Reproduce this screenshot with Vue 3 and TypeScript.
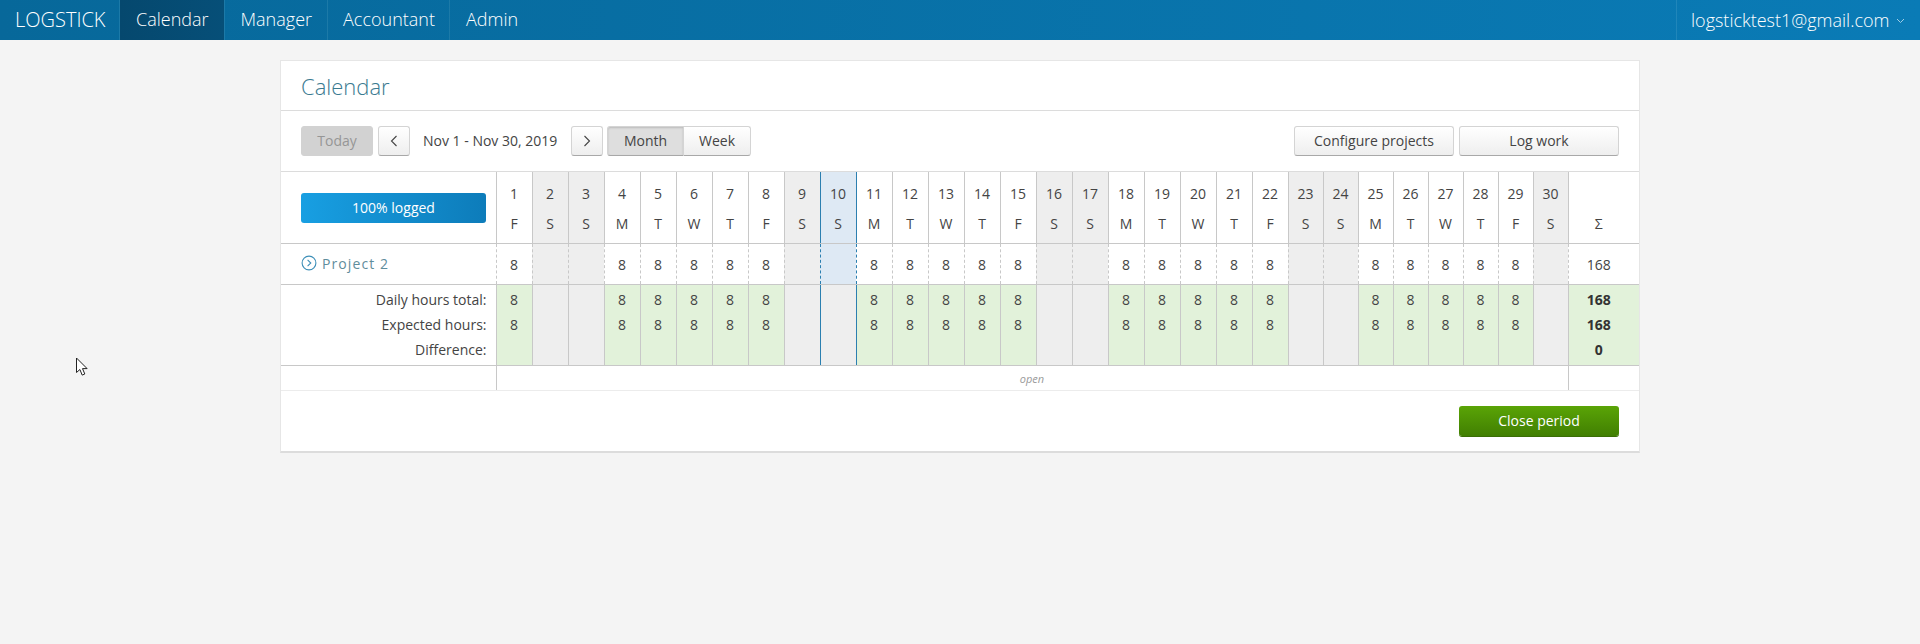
<script setup lang="ts">
interface Day {
  n: number
  w: string
  weekend: boolean
  selected: boolean
}

const letters = ['F', 'S', 'S', 'M', 'T', 'W', 'T']
const days: Day[] = Array.from({ length: 30 }, (_, i) => {
  const w = letters[i % 7]
  return { n: i + 1, w, weekend: w === 'S', selected: i === 9 }
})
const navItems = ['Calendar', 'Manager', 'Accountant', 'Admin']
const dayClass = (d: Day) => ({ weekend: d.weekend, selected: d.selected })
</script>

<template>
  <div class="page">
    <header class="nav">
      <div class="brand">LOGSTICK</div>
      <a v-for="(item, i) in navItems" :key="item" class="nav-item" :class="{ active: i === 0 }">{{ item }}</a>
      <div class="user">
        <span>logsticktest1@gmail.com</span>
        <svg width="9" height="6" viewBox="0 0 9 6" class="caret"><path d="M1 1l3.5 3.5L8 1" fill="none" stroke="#9fcde6" stroke-width="1" /></svg>
      </div>
    </header>

    <main class="card">
      <h1 class="title">Calendar</h1>

      <div class="toolbar">
        <button class="btn today">Today</button>
        <button class="btn arrow">
          <svg width="8" height="12" viewBox="0 0 8 12"><path d="M6.5 1L1.5 6l5 5" fill="none" stroke="#444" stroke-width="1.1" /></svg>
        </button>
        <span class="range">Nov 1 - Nov 30, 2019</span>
        <button class="btn arrow">
          <svg width="8" height="12" viewBox="0 0 8 12"><path d="M1.5 1l5 5-5 5" fill="none" stroke="#444" stroke-width="1.1" /></svg>
        </button>
        <div class="segment">
          <button class="btn seg month">Month</button>
          <button class="btn seg week">Week</button>
        </div>
        <div class="spacer"></div>
        <button class="btn wide">Configure projects</button>
        <button class="btn wide">Log work</button>
      </div>

      <table class="grid">
        <colgroup>
          <col class="col-label" />
          <col v-for="d in days" :key="d.n" :class="d.n > 22 ? 'col-narrow' : 'col-day'" />
          <col class="col-sum" />
        </colgroup>
        <tbody>
          <tr class="row-head">
            <td class="label"><div class="logged">100% logged</div></td>
            <td v-for="d in days" :key="d.n" class="day" :class="dayClass(d)">
              <div class="num">{{ d.n }}</div>
              <div class="wd">{{ d.w }}</div>
            </td>
            <td class="sum-head"><div class="wd">Σ</div></td>
          </tr>
          <tr class="row-project">
            <td class="label project">
              <span class="project-name">
                <svg width="16" height="16" viewBox="0 0 16 16"><circle cx="8" cy="8" r="6.9" fill="none" stroke="#3d8fb8" stroke-width="1.1" /><path d="M6.6 4.8L9.8 8l-3.2 3.2" fill="none" stroke="#3d8fb8" stroke-width="1.1" /></svg>
                Project 2
              </span>
            </td>
            <td v-for="d in days" :key="d.n" class="hours" :class="dayClass(d)">{{ d.weekend ? '' : 8 }}</td>
            <td class="sum-plain">168</td>
          </tr>
          <tr class="row-total">
            <td class="label totals">
              <div>Daily hours total:</div>
              <div>Expected hours:</div>
              <div>Difference:</div>
            </td>
            <td v-for="d in days" :key="d.n" class="total" :class="dayClass(d)">
              <template v-if="!d.weekend"><div>8</div><div>8</div></template>
            </td>
            <td class="total sum-bold"><div>168</div><div>168</div><div>0</div></td>
          </tr>
          <tr class="row-open">
            <td class="label"></td>
            <td class="open" colspan="30">open</td>
            <td class="open-end"></td>
          </tr>
        </tbody>
      </table>

      <footer class="foot">
        <button class="btn close">Close period</button>
      </footer>
    </main>

    <svg class="cursor" width="14" height="20" viewBox="0 0 14 20">
      <path d="M1.5 1v14.5l3.4-3 2.3 5.6 2.6-1.1-2.3-5.4h4.6z" fill="#fff" stroke="#222" stroke-width="1" />
    </svg>
  </div>
</template>

<style>
html,
body {
  margin: 0;
  background: #f4f4f4;
}
</style>

<style scoped>
.page {
  position: relative;
  min-height: 644px;
  background: #f4f4f4;
  font-family: 'Open Sans', 'Liberation Sans', sans-serif;
  font-size: 14px;
  color: #444;
  overflow: hidden;
}
.nav {
  display: flex;
  height: 40px;
  background: linear-gradient(90deg, #07689a 0%, #0a7bb6 100%);
  color: #fff;
  font-size: 18px;
  font-weight: 300;
  line-height: 39px;
}
.brand {
  width: 104px;
  padding-left: 15px;
  font-size: 20px;
  border-right: 1px solid #1c7aa8;
}
.nav-item {
  padding: 0 15px 0 16px;
  border-right: 1px solid #1c7aa8;
}
.nav-item:nth-of-type(3) {
  padding: 0 14px 0 15px;
}
.nav-item:last-of-type {
  border-right: 0;
}
.nav-item.active {
  background: linear-gradient(90deg, #05486e, #064f78);
}
.user {
  display: flex;
  align-items: center;
  margin-left: auto;
  width: 244px;
  box-sizing: border-box;
  padding-left: 14px;
  border-left: 1px solid #2086ba;
}
.caret {
  margin-left: 7px;
  margin-top: 2px;
}
.card {
  margin: 20px 0 0 280px;
  width: 1360px;
  box-sizing: border-box;
  background: #fff;
  border: 1px solid #e6e6e6;
  border-bottom: 2px solid #dcdcdc;
}
.title {
  margin: 0;
  height: 49px;
  padding-left: 20px;
  font-size: 22px;
  font-weight: 300;
  line-height: 51px;
  color: #3a7a90;
  border-bottom: 1px solid #dcdcdc;
}
.toolbar {
  display: flex;
  align-items: center;
  height: 61px;
  padding: 0 20px;
  box-sizing: border-box;
  border-bottom: 1px solid #dcdcdc;
}
.spacer {
  flex: 1;
}
.btn {
  height: 30px;
  box-sizing: border-box;
  padding: 0 0 2px;
  font: inherit;
  font-size: 14px;
  color: #444;
  background: linear-gradient(#fff, #eee);
  border: 1px solid #d4d4d4;
  border-bottom-color: #a8a8a8;
  border-radius: 3px;
  display: inline-flex;
  align-items: center;
  justify-content: center;
}
.today {
  width: 72px;
  margin-right: 5px;
  background: #d2d2d2;
  border-color: #d2d2d2;
  color: #969696;
}
.arrow {
  width: 32px;
  padding: 0;
}
.range {
  width: 161px;
  box-sizing: border-box;
  padding: 0 0 2px 13px;
  color: #444;
}
.segment {
  display: flex;
  margin-left: 4px;
}
.month {
  width: 77px;
  background: #dedede;
  border-radius: 3px 0 0 3px;
  box-shadow: inset 0 1px 2px #bbb;
}
.week {
  width: 67px;
  border-left: 0;
  border-radius: 0 3px 3px 0;
}
.wide {
  width: 160px;
  margin-left: 5px;
}
.grid {
  width: 1358px;
  table-layout: fixed;
  border-collapse: collapse;
}
.col-label {
  width: 215px;
}
.col-day {
  width: 36px;
}
.col-narrow {
  width: 35px;
}
.col-sum {
  width: 71px;
}
td {
  padding: 0;
  text-align: center;
  border-left: 1px solid #c8c8c8;
  border-bottom: 1px solid #c8c8c8;
}
td.label {
  border-left: 0;
}
.row-head td {
  height: 71px;
}
.row-head td.day {
  height: 69px;
  padding-top: 2px;
}
.num {
  line-height: 20px;
  margin-bottom: 10px;
}
.wd {
  line-height: 20px;
}
.logged {
  width: 185px;
  height: 30px;
  margin-left: 20px;
  border-radius: 3px;
  background: linear-gradient(90deg, #189fe2, #0d7cba);
  color: #fff;
  line-height: 30px;
}
.weekend {
  background: #eee;
}
.selected {
  background: #dee9f4;
  border-left: 1px solid #2b7fb0;
  border-right: 1px solid #2b7fb0;
}
.sum-head {
  vertical-align: bottom;
  padding-right: 10px;
}
.sum-head .wd {
  padding-bottom: 9px;
}
.row-project td {
  height: 40px;
}
.hours {
  border-left-style: dashed;
}
.selected.hours {
  border-left-style: dashed;
  border-right-style: dashed;
}
.project {
  text-align: left;
  padding-left: 20px;
}
.project-name {
  display: inline-flex;
  align-items: center;
  gap: 5px;
  padding-top: 1px;
  color: #5f8d9c;
  letter-spacing: 1.1px;
}
.sum-plain {
  border-left-style: dashed;
  padding-right: 10px;
}
.row-total td {
  height: 78px;
  vertical-align: top;
  line-height: 25px;
  padding-top: 2px;
}
.totals {
  text-align: right;
  padding-right: 9px;
}
.total {
  background: #e2f2da;
}
.total.weekend {
  background: #eee;
}
.total.selected {
  background: #eee;
  border-left-style: solid;
  border-right-style: solid;
}
td.sum-bold {
  font-weight: 700;
  color: #333;
  padding-right: 10px;
}
.row-open td {
  height: 24px;
  border-bottom-color: #ececec;
}
.open {
  font-size: 11px;
  font-style: italic;
  color: #9a9a9a;
}
.foot {
  display: flex;
  justify-content: flex-end;
  align-items: center;
  height: 60px;
  padding-right: 20px;
}
.close {
  width: 160px;
  border: 0;
  background: linear-gradient(#5aa406, #417f02);
  color: #fff;
  box-shadow: 0 1px 0 #3a6e05;
}
.cursor {
  position: absolute;
  left: 75px;
  top: 357px;
}
</style>
